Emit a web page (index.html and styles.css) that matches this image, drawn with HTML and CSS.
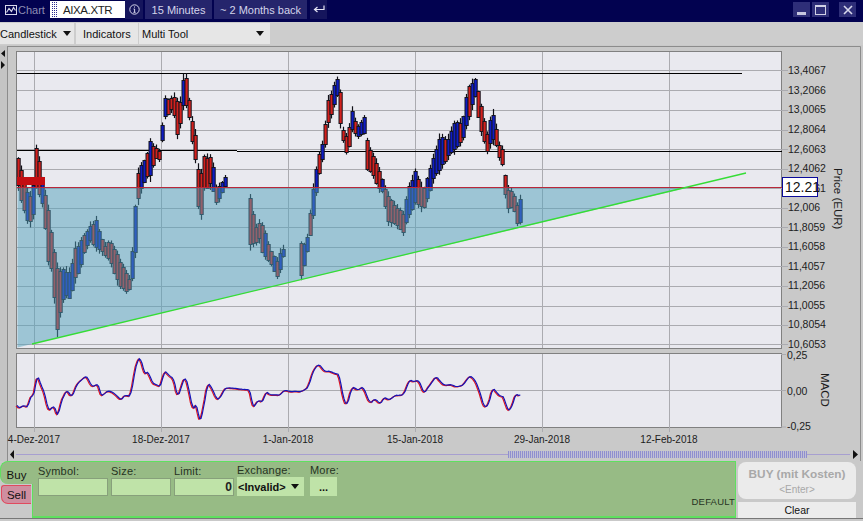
FILE: index.html
```html
<!DOCTYPE html>
<html lang="en">
<head>
    <meta charset="UTF-8">
    <title>Chart - AIXA.XTR</title>
    <link rel="stylesheet" href="styles.css">
</head>
<body>
    <div class="title-bar">
        <svg class="chart-icon" width="12" height="10" viewBox="0 0 12 10">
            <rect x="0.5" y="0.5" width="11" height="9" fill="none" stroke="#d8d8ec"/>
            <path d="M1.5 7.5 L4 3.5 L6.5 6.5 L8.5 2.5 L10.5 5.5" fill="none" stroke="#d8d8ec" stroke-width="1.2"/>
        </svg>
        <span class="title-label">Chart</span>
        <div class="symbol-box"><span class="grip"></span>AIXA.XTR</div>
        <div class="title-btn info-btn">
            <svg width="11" height="11" viewBox="0 0 11 11">
                <circle cx="5.5" cy="5.5" r="4.7" fill="none" stroke="#d8d8ec"/>
                <path d="M5.5 2.5 V3.6 M4.5 5 H5.6 V8.3 M4.4 8.3 H6.6" fill="none" stroke="#d8d8ec"/>
            </svg>
        </div>
        <div class="title-btn time-btn">15 Minutes</div>
        <div class="title-btn range-btn">~ 2 Months back</div>
        <div class="title-btn return-btn">
            <svg width="12" height="9" viewBox="0 0 12 9">
                <path d="M11 0.5 V4.5 H2 M4.5 2 L1.5 4.5 L4.5 7" fill="none" stroke="#e4e4f4" stroke-width="1.2"/>
            </svg>
        </div>
        <div class="window-btns">
            <div class="win-btn"><span class="win-min"></span></div>
            <div class="win-btn"><span class="win-max"></span></div>
            <div class="win-btn win-close">
                <svg width="10" height="10" viewBox="0 0 10 10">
                    <path d="M1 1 L9 9 M9 1 L1 9" stroke="#d8d8ec" stroke-width="1.6"/>
                </svg>
            </div>
        </div>
    </div>

    <div class="toolbar">
        <div class="tool-btn candle-btn">Candlestick<span class="caret"></span></div>
        <div class="tool-btn indicators-btn">Indicators</div>
        <div class="tool-btn multi-btn">Multi Tool<span class="caret"></span></div>
    </div>

    <svg class="chart" id="chart" width="863" height="416" viewBox="0 45 863 416">
        <defs>
            <pattern id="hatch" width="2" height="2" patternUnits="userSpaceOnUse">
                <rect width="1" height="2" fill="#8f8fcf"/>
                <rect x="1" width="1" height="2" fill="#c0c0d4"/>
            </pattern>
        </defs>

        <rect class="gutter" x="0" y="46" width="7" height="415"/>
        <path class="rail" d="M7.5 46 V461 M7.5 46.5 H860.5 V461"/>
        <path class="arrow" d="M5 50 V57 L1 53.5 Z M1 61 V69 L5 65 Z"/>

        <rect class="plot" x="16.5" y="51.5" width="765" height="297"/>
        <rect class="plot" x="16.5" y="353.5" width="765" height="74"/>

        <path class="grid" d="M17 70.5H788 M17 90.5H788 M17 110.5H788 M17 130.5H788 M17 149.5H788 M17 169.5H788 M17 188.5H788 M17 208.5H788 M17 227.5H788 M17 247.5H788 M17 266.5H788 M17 286.5H788 M17 306.5H788 M17 325.5H788 M17 344.5H788"/>
        <path class="grid" d="M34.5 52V348 M161.5 52V348 M288.5 52V348 M415.5 52V348 M542.5 52V348 M669.5 52V348"/>
        <path class="grid" d="M34.5 354V432 M161.5 354V432 M288.5 354V432 M415.5 354V432 M542.5 354V432 M669.5 354V432 M17 390.5H786 M781 354.5H786 M781 427H786"/>

        <path class="level" d="M17 73.5H742 M17 150.5H237 M237 151.5H782"/>
        <g id="candles"></g>
        <rect class="red-block" x="17" y="177" width="28" height="8"/>
        <polygon class="zone" points="17.5,187 690,187 32,344 17.5,347.5"/>
        <path class="level-red" d="M17 187.5H782"/>
        <path class="trend" d="M32 344 L746 173"/>

        <g id="macd"></g>

        <g class="axis-text">
            <text x="788" y="74">13,4067</text>
            <text x="788" y="94">13,2066</text>
            <text x="788" y="113">13,0065</text>
            <text x="788" y="133">12,8064</text>
            <text x="788" y="153">12,6063</text>
            <text x="788" y="172">12,4062</text>
            <text x="788" y="192">12,2061</text>
            <text x="788" y="211">12,006</text>
            <text x="788" y="231">11,8059</text>
            <text x="788" y="250">11,6058</text>
            <text x="788" y="270">11,4057</text>
            <text x="788" y="289">11,2056</text>
            <text x="788" y="309">11,0055</text>
            <text x="788" y="328">10,8054</text>
            <text x="788" y="347.5">10,6053</text>
            <text x="787" y="359">0,25</text>
            <text x="787" y="395">0,00</text>
            <text x="787" y="430">-0,25</text>
            <text class="date" x="34" y="443">4-Dez-2017</text>
            <text class="date" x="161" y="443">18-Dez-2017</text>
            <text class="date" x="288" y="443">1-Jan-2018</text>
            <text class="date" x="415" y="443">15-Jan-2018</text>
            <text class="date" x="542" y="443">29-Jan-2018</text>
            <text class="date" x="669" y="443">12-Feb-2018</text>
            <text class="rotated" transform="translate(834 168) rotate(90)">Price (EUR)</text>
            <text class="rotated" transform="translate(821 373) rotate(90)">MACD</text>
        </g>

        <rect class="price-tag" x="782.5" y="177.5" width="35" height="19"/>
        <text class="price-text" x="785" y="192">12.21</text>

        <path class="scroll-line" d="M16 454.5H850"/>
        <rect x="508" y="451" width="299" height="7" fill="url(#hatch)"/>
        <path class="arrow" d="M14 450 V459 L10 454.5 Z M853 450 V459 L858 454.5 Z"/>
    </svg>

    <div class="order-row">
        <div class="order-tabs">
            <div class="tab-buy">Buy</div>
            <div class="tab-sell">Sell</div>
        </div>
        <div class="order-panel">
            <div class="field field-symbol">
                <label>Symbol:</label>
                <div class="field-input"></div>
            </div>
            <div class="field field-size">
                <label>Size:</label>
                <div class="field-input"></div>
            </div>
            <div class="field field-limit">
                <label>Limit:</label>
                <div class="field-input limit-value">0</div>
            </div>
            <div class="field field-exchange">
                <label>Exchange:</label>
                <div class="field-flat exchange-value">&lt;Invalid&gt;<span class="caret"></span></div>
            </div>
            <div class="field field-more">
                <label>More:</label>
                <div class="field-flat more-value">...</div>
            </div>
            <span class="default-label">DEFAULT</span>
        </div>
        <div class="order-actions">
            <div class="buy-btn">
                <span class="buy-title">BUY (mit Kosten)</span>
                <span class="buy-hint">&lt;Enter&gt;</span>
            </div>
            <div class="clear-btn">Clear</div>
        </div>
    </div>

    <script src="chart.js"></script>
</body>
</html>
```

FILE: styles.css
```css
* {
    box-sizing: border-box;
}

body {
    font-family: 'Liberation Sans', Arial, sans-serif;
    font-size: 11px;
    margin: 0;
    width: 863px;
    height: 521px;
    overflow: hidden;
    background: #c9c9c9;
    color: #111;
}

.title-bar {
    display: flex;
    align-items: center;
    height: 22px;
    padding: 0 7px 3px 5px;
    background: #020250;
    color: #d4d4ea;
    font-size: 11px;
}

.chart-icon {
    margin-right: 1px;
}

.title-label {
    width: 32px;
    color: #8e8eb4;
}

.symbol-box {
    display: flex;
    align-items: center;
    width: 75px;
    height: 17px;
    background: #fff;
    color: #222;
    font-size: 11.5px;
    letter-spacing: -0.4px;
}

.grip {
    width: 6px;
    height: 15px;
    margin: 0 5px 0 2px;
    background-image: radial-gradient(circle at 0.5px 0.5px, #2a2a90 0.7px, transparent 0.8px);
    background-size: 2px 2px;
}

.title-btn {
    display: flex;
    align-items: center;
    justify-content: center;
    height: 19px;
    background: #25256c;
    margin-right: 2px;
}

.info-btn {
    width: 18px;
    background: #15155c;
}

.time-btn {
    width: 67px;
}

.range-btn {
    width: 93px;
    margin-right: 3px;
}

.return-btn {
    width: 17px;
    background: #15155c;
}

.window-btns {
    display: flex;
    margin-left: auto;
}

.win-btn {
    display: flex;
    align-items: center;
    justify-content: center;
    width: 17px;
    height: 15px;
    margin-left: 2px;
    background: #2e2e78;
}

.win-close {
    margin-left: 10px;
}

.win-min {
    width: 9px;
    height: 3px;
    margin-top: 8px;
    background: #c6c6e0;
}

.win-max {
    width: 11px;
    height: 10px;
    border: 1px solid #d0d0e6;
    border-top-width: 2px;
}

.toolbar {
    display: flex;
    align-items: center;
    height: 23px;
    background: #cdcdcd;
}

.tool-btn {
    display: flex;
    align-items: center;
    height: 21px;
    background: #e6e6e6;
    font-size: 11px;
}

.candle-btn {
    width: 74px;
    margin-right: 2px;
}

.indicators-btn {
    width: 62px;
    margin-right: 1px;
    padding-left: 7px;
}

.multi-btn {
    width: 131px;
    padding-left: 3px;
}

.multi-btn .caret {
    margin-left: auto;
    margin-right: 6px;
}

.caret {
    display: inline-block;
    width: 0;
    height: 0;
    margin-left: 6px;
    border-left: 4px solid transparent;
    border-right: 4px solid transparent;
    border-top: 5px solid #111;
}

.chart {
    display: block;
}

.gutter {
    fill: #c4c4c4;
}

.rail {
    fill: none;
    stroke: #8c8c8c;
}

.arrow {
    fill: #111;
}

.plot {
    fill: #e9e9ef;
    stroke: #808080;
}

.grid {
    fill: none;
    stroke: #ababb0;
}

.level {
    fill: none;
    stroke: #000;
}

.red-block {
    fill: #c40d12;
}

.zone {
    fill: rgba(81, 161, 188, 0.5);
}

.level-red {
    stroke: #b8283a;
}

.trend {
    stroke: #35dd35;
    stroke-width: 1.3;
}

.axis-text text {
    font-size: 10.5px;
    fill: #1c1c1c;
}

.axis-text .date {
    font-size: 10px;
    text-anchor: middle;
}

.axis-text .rotated {
    font-size: 11.5px;
}

.price-tag {
    fill: #fff;
    stroke: #0a0a9a;
}

.price-text {
    font-size: 14px;
    fill: #111;
}

.scroll-line {
    stroke: #a79fd0;
}

.order-row {
    display: flex;
    height: 58px;
    border-bottom: 1px solid #777;
}

.order-tabs {
    width: 32px;
    flex-shrink: 0;
}

.tab-buy {
    display: flex;
    align-items: center;
    justify-content: center;
    height: 23px;
    padding-top: 3px;
    background: #97bb85;
    border: 1px solid #5fe05f;
    border-right: none;
    border-bottom: none;
    border-radius: 8px 0 0 8px;
    font-size: 11.5px;
}

.tab-sell {
    display: flex;
    align-items: center;
    justify-content: center;
    width: 30px;
    height: 19px;
    margin: 1px 0 0 1px;
    background: #cf8ea0;
    border: 1px solid #e04a5e;
    border-right: none;
    border-radius: 3px 0 0 7px;
    font-size: 11.5px;
}

.order-panel {
    position: relative;
    display: flex;
    width: 704px;
    padding: 3px 0 0 6px;
    background: #97bb85;
    border: 1px solid #5fe05f;
    border-left: none;
    border-bottom-width: 2px;
}

/* left edge only runs below the Buy tab */
.order-panel::before {
    content: "";
    position: absolute;
    left: 0;
    top: 22px;
    bottom: 0;
    width: 1px;
    background: #5fe05f;
}

.field {
    display: flex;
    flex-direction: column;
    color: #26331f;
    font-size: 11px;
}

.field label {
    height: 12px;
    line-height: 12px;
    letter-spacing: 0.2px;
}

.field-input {
    height: 18px;
    margin-top: 1px;
    background: #bfe3a8;
    border: 1px solid #87a07b;
}

.field-symbol {
    width: 70px;
    margin-right: 3px;
}

.field-size {
    width: 60px;
    margin-right: 3px;
}

.field-limit {
    width: 60px;
    margin-right: 3px;
}

.limit-value {
    padding-right: 1px;
    text-align: right;
    font-weight: bold;
    font-size: 12px;
    line-height: 16px;
    color: #222;
}

.field-exchange {
    width: 67px;
    margin-right: 6px;
}

.field-more {
    width: 27px;
}

.field-exchange label,
.field-more label {
    height: 11px;
    line-height: 10px;
}

.field-flat {
    display: flex;
    align-items: center;
    height: 19px;
    margin-top: 1px;
    background: #bfe3a8;
    color: #111;
    font-weight: bold;
    font-size: 11px;
}

.exchange-value {
    padding-left: 1px;
}

.exchange-value .caret {
    margin-left: 5px;
}

.more-value {
    justify-content: center;
}

.default-label {
    position: absolute;
    right: 0;
    bottom: 9px;
    font-size: 9.5px;
    letter-spacing: 0.2px;
    color: #26331f;
}

.order-actions {
    display: flex;
    flex-direction: column;
    width: 118px;
    margin-left: 2px;
}

.buy-btn {
    display: flex;
    flex-direction: column;
    align-items: center;
    justify-content: center;
    height: 37px;
    margin-top: 1px;
    background: #ebebeb;
    border-radius: 8px;
}

.buy-title {
    font-size: 11.8px;
    font-weight: bold;
    color: #a8a8a8;
}

.buy-hint {
    margin-top: 3px;
    font-size: 10px;
    color: #a8a8a8;
}

.clear-btn {
    display: flex;
    align-items: center;
    justify-content: center;
    height: 16px;
    margin-top: 3px;
    background: #ececec;
    font-size: 10.5px;
}
```

FILE: chart.js
```js
const SVG_NS = 'http://www.w3.org/2000/svg';

// price envelope per trading stretch: [x, top, bottom]
const stretches = [
    [[18, 158, 188], [22, 172, 205], [27, 190, 222], [32, 195, 225], [36, 146, 188], [39, 160, 195], [44, 190, 212],
     [47, 200, 265], [50, 225, 260], [54, 250, 300], [57, 265, 335], [61, 270, 308], [64, 268, 298], [70, 272, 298],
     [75, 245, 280], [80, 242, 270], [85, 232, 248], [90, 225, 242], [97, 218, 250], [100, 235, 250], [105, 245, 256],
     [110, 240, 262], [118, 255, 285], [125, 270, 292], [130, 280, 290], [132, 250, 280], [135, 205, 255], [137, 172, 205],
     [141, 165, 190], [146, 157, 178], [150, 140, 178], [155, 148, 158], [160, 150, 160], [162, 125, 140], [165, 97, 118],
     [170, 100, 112], [173, 92, 105], [176, 100, 140], [180, 100, 125], [184, 70, 100], [187, 80, 108], [190, 108, 125],
     [193, 125, 150], [197, 140, 172], [199, 190, 243], [203, 155, 190], [207, 155, 188], [212, 155, 185], [215, 185, 205],
     [220, 185, 198], [225, 176, 186]],
    [[250, 195, 247], [255, 227, 243], [259, 222, 240], [263, 223, 257], [270, 250, 263], [277, 260, 277], [280, 252, 270], [283, 248, 257]],
    [[301, 243, 278], [305, 243, 262], [308, 233, 247], [312, 193, 223], [317, 163, 187], [320, 150, 167], [324, 135, 155],
     [327, 100, 127], [332, 90, 112], [338, 75, 93], [340, 92, 125], [342, 127, 137], [347, 137, 157], [352, 110, 130],
     [357, 127, 137], [364, 117, 133], [366, 137, 170], [372, 153, 173], [377, 163, 187], [383, 182, 193], [387, 193, 223],
     [395, 205, 225], [403, 212, 233], [408, 187, 217], [415, 170, 203], [423, 190, 210], [428, 175, 197], [433, 157, 180],
     [440, 132, 170], [447, 140, 157], [455, 120, 150], [462, 123, 142], [467, 87, 123], [475, 78, 97], [480, 100, 130],
     [487, 133, 152], [492, 108, 140], [497, 132, 148], [501, 157, 168], [503, 140, 160], [504, 168, 187], [507, 188, 210],
     [513, 192, 207], [518, 207, 227], [522, 187, 217]]
];

// MACD traced in two runs: [offset x, offset y, points]
const macdRuns = [
    [0, 345, [[50,180],[60,195],[70,175],[75,190],[85,180],[92,150],[102,155],[110,85],[120,115],[135,150],[145,205],[150,190],
     [165,185],[172,222],[182,170],[200,135],[215,158],[232,115],[260,92],[275,125],[295,118],[302,155],[325,135],[345,148],
     [365,165],[372,150],[392,155],[402,90],[413,38],[425,50],[433,90],[445,78],[455,112],[482,125],[492,78],[510,95],[520,100],
     [532,158],[555,90],[565,130],[578,195],[590,175],[598,235],[610,190],[623,112],[635,130],[650,165],[662,155],[675,128],
     [750,135],[758,190],[775,165],[788,170],[797,140],[810,150],[825,150]]],
    [280, 345, [[0,150],[10,138],[65,140],[85,125],[100,75],[115,57],[135,80],[150,80],[178,88],[187,150],[200,185],[215,125],
     [235,135],[250,125],[260,155],[270,175],[285,160],[300,178],[312,158],[325,165],[345,152],[370,150],[388,105],[405,110],
     [415,105],[432,145],[445,125],[468,95],[490,120],[510,118],[530,125],[548,120],[568,92],[585,105],[600,145],[612,188],
     [625,180],[638,128],[660,155],[672,155],[682,198],[695,185],[708,142],[715,155],[725,140]]]
];

// small fixed generator so the picture is the same on every load
let seed = 7;
function rand() {
    seed = (seed * 16807) % 2147483647;
    return seed / 2147483647;
}

function addEl(parent, name, attrs) {
    const el = document.createElementNS(SVG_NS, name);
    for (const key in attrs) {
        el.setAttribute(key, attrs[key]);
    }
    parent.appendChild(el);
    return el;
}

function envelopeAt(points, x) {
    for (let i = 1; i < points.length; i++) {
        if (x <= points[i][0]) {
            const a = points[i - 1];
            const b = points[i];
            const t = (x - a[0]) / (b[0] - a[0]);
            return [a[1] + (b[1] - a[1]) * t, a[2] + (b[2] - a[2]) * t];
        }
    }
    const last = points[points.length - 1];
    return [last[1], last[2]];
}

function drawCandles() {
    const group = document.getElementById('candles');
    stretches.forEach(points => {
        const startX = points[0][0];
        const endX = points[points.length - 1][0];
        let prevMid = null;
        for (let x = startX; x <= endX; x += 3) {
            const [top, bottom] = envelopeAt(points, x);
            const mid = (top + bottom) / 2;
            const span = bottom - top;
            const bodyTop = Math.round(top + rand() * span * 0.1);
            const bodyBottom = Math.round(bottom - rand() * span * 0.1);
            // falling stretches read red, rising ones mostly blue
            const climbing = prevMid !== null && mid < prevMid - 2;
            const blue = climbing ? rand() < 0.7 : rand() < 0.12;
            prevMid = mid;
            const cx = Math.round(x);
            addEl(group, 'line', {
                x1: cx + 0.5, x2: cx + 0.5,
                y1: top - rand() * 4, y2: bottom + rand() * 4,
                stroke: '#101018',
                'stroke-width': 1.2
            });
            addEl(group, 'rect', {
                x: cx - 1, y: bodyTop + 0.5, width: 3.2, height: Math.max(bodyBottom - bodyTop, 3),
                fill: blue ? '#0e1cc4' : '#d4201c',
                stroke: '#14141e',
                'stroke-width': 1
            });
        }
    });
}

// walk the traced line in short steps, add a little noise, then round the corners
function macdCurve() {
    const traced = macdRuns.flatMap(([ox, oy, list]) => list.map(p => [ox + p[0] / 3, oy + p[1] / 3]));
    const dense = [];
    for (let i = 1; i < traced.length; i++) {
        const a = traced[i - 1];
        const b = traced[i];
        const steps = Math.max(1, Math.round((b[0] - a[0]) / 1.5));
        for (let s = 0; s < steps; s++) {
            const t = s / steps;
            dense.push([a[0] + (b[0] - a[0]) * t, a[1] + (b[1] - a[1]) * t + (rand() - 0.5) * 1.2]);
        }
    }
    return dense.map((p, i) => {
        const prev = dense[Math.max(i - 1, 0)];
        const next = dense[Math.min(i + 1, dense.length - 1)];
        return [p[0], (prev[1] + p[1] + next[1]) / 3];
    });
}

function drawMacd() {
    const group = document.getElementById('macd');
    const curve = macdCurve();
    const line = (dx, dy) => curve.map(p => (p[0] + dx).toFixed(1) + ',' + (p[1] + dy).toFixed(1)).join(' ');
    addEl(group, 'polyline', { points: line(-0.7, 0.5), fill: 'none', stroke: '#e0141e', 'stroke-width': 1.2 });
    addEl(group, 'polyline', { points: line(0.3, 0), fill: 'none', stroke: '#1414b8', 'stroke-width': 1.2 });
}

drawCandles();
drawMacd();
```
